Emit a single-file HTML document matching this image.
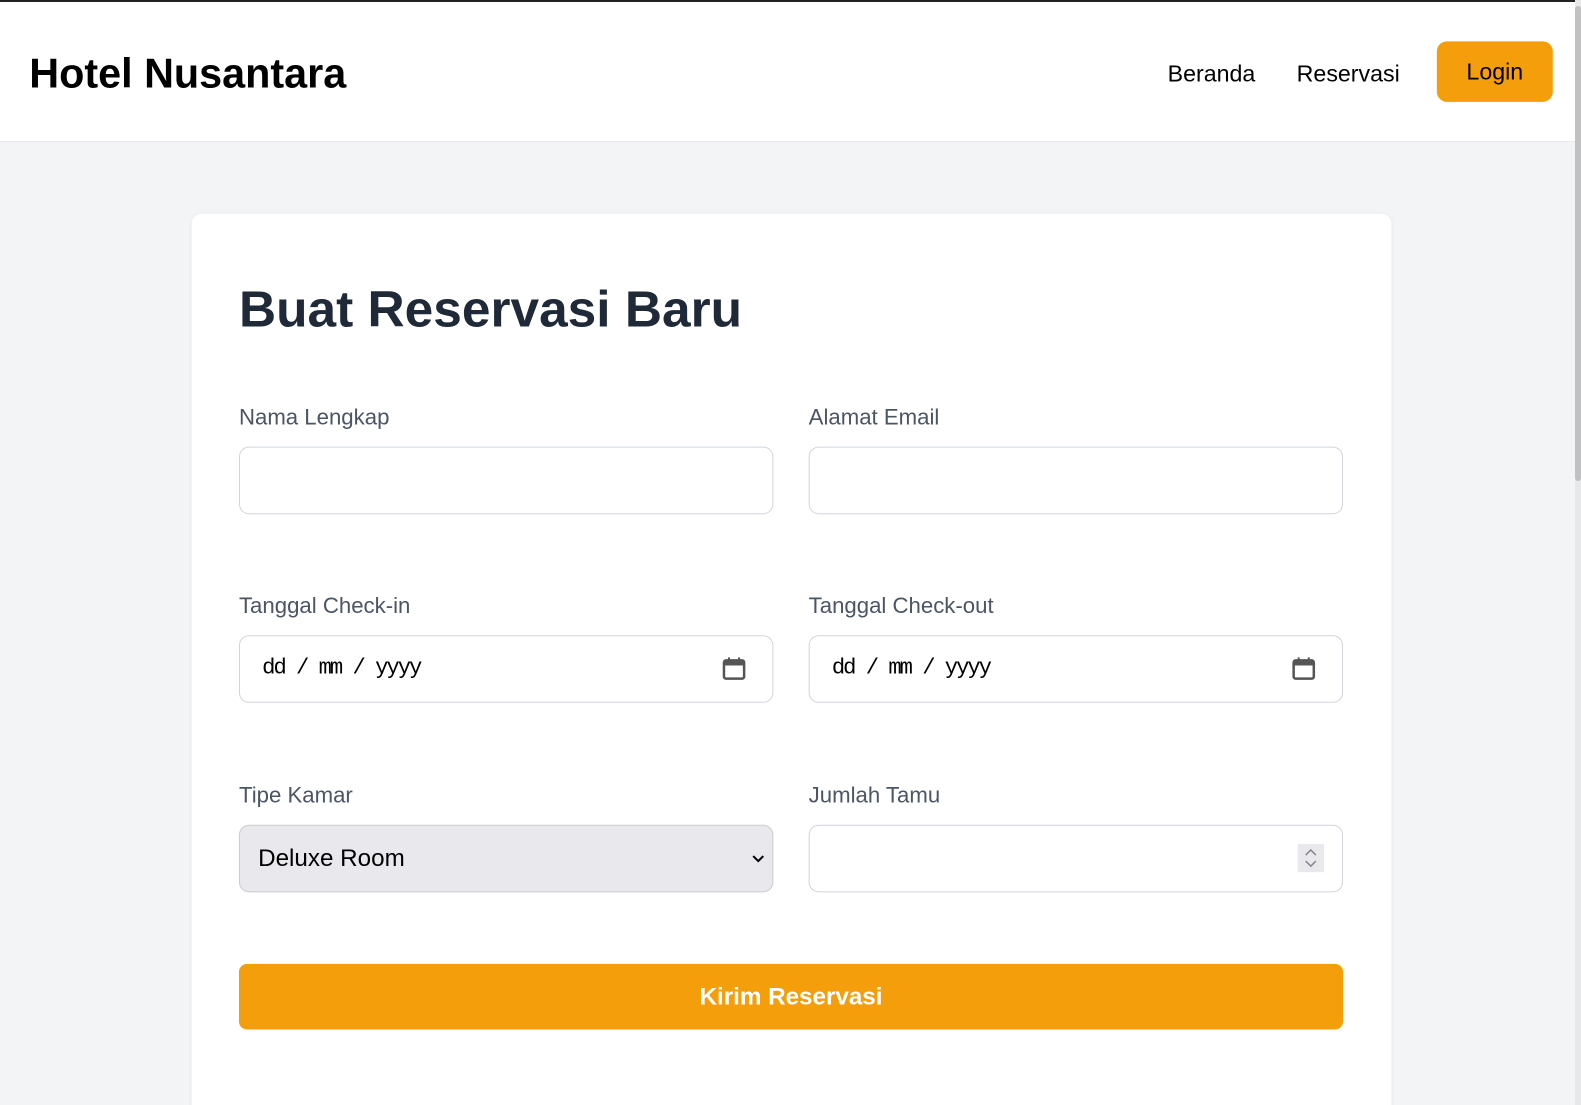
<!DOCTYPE html>
<html style="overflow:hidden;width:1581px;height:1105px"><head><style>
*{box-sizing:border-box;margin:0;padding:0}
body{width:1581px;height:1105px;overflow:hidden;background:#f3f4f6;font-family:"Liberation Sans",sans-serif;position:relative}
.w{position:absolute;left:0;top:0;width:1568px;height:1096px;transform:scale(1.0083);transform-origin:0 0}
.top{position:absolute;left:0;top:0;width:1581px;height:2px;background:#222;z-index:5}
.hdr{position:absolute;left:0;top:0;width:1581px;height:141px;background:#fff;border-bottom:1px solid #e5e7eb}
.logo{position:absolute;left:29px;top:50px;font-size:41px;font-weight:bold;color:#000}
.nav{position:absolute;top:60px;font-size:23px;color:#000}
.login{position:absolute;left:1425px;top:41px;width:115px;height:60px;background:#f49e0c;border-radius:10px;font-size:23px;line-height:60px;text-align:center}
.sb{position:absolute;left:1575px;top:0;width:6px;height:1105px;background:#e8e8e8;z-index:6}
.sb div{position:absolute;left:0;top:6px;width:6px;height:475px;background:#c1c1c1;border-radius:3px}
.card{position:absolute;left:190px;top:212px;width:1190px;height:900px;background:#fff;border-radius:10px 10px 0 0;box-shadow:0 1px 3px rgba(0,0,0,.08)}
h1{position:absolute;left:237px;top:277px;font-size:51px;font-weight:bold;color:#1f2937}
.lbl{position:absolute;font-size:22px;color:#4b5563}
.in{position:absolute;width:530px;height:67px;border:1px solid #d1d5db;border-radius:10px;background:#fff}
.date{font-family:"Liberation Mono",monospace;font-size:22px;color:#000;position:absolute;left:22px;top:19px;letter-spacing:-2px}
.cal{position:absolute;right:26px;top:20px}
.btn{position:absolute;left:237px;top:956px;width:1095px;height:65px;background:#f49e0c;border-radius:8px;color:#fff;font-weight:bold;font-size:24px;text-align:center;line-height:65px}
</style></head><body>
<div class="top"></div>
<div class="sb"><div></div></div>
<div class="w">
<div class="hdr">
<div class="logo">Hotel Nusantara</div>
<div class="nav" style="left:1158px">Beranda</div>
<div class="nav" style="left:1286px">Reservasi</div>
<div class="login">Login</div>
</div>
<div class="card"></div>
<h1>Buat Reservasi Baru</h1>
<div class="lbl" style="left:237px;top:401px">Nama Lengkap</div>
<div class="lbl" style="left:802px;top:401px">Alamat Email</div>
<div class="in" style="left:237px;top:443px"></div>
<div class="in" style="left:802px;top:443px"></div>
<div class="lbl" style="left:237px;top:588px">Tanggal Check-in</div>
<div class="lbl" style="left:802px;top:588px">Tanggal Check-out</div>
<div class="in" style="left:237px;top:630px"><span class="date">dd / mm / yyyy</span><svg class="cal" width="24" height="24" viewBox="0 0 24 24"><rect x="2" y="4" width="20" height="18" rx="2" fill="none" stroke="#555" stroke-width="2.5"/><rect x="2" y="4" width="20" height="5" fill="#555"/><rect x="6" y="1" width="2" height="4" fill="#555"/><rect x="16" y="1" width="2" height="4" fill="#555"/></svg></div>
<div class="in" style="left:802px;top:630px"><span class="date">dd / mm / yyyy</span><svg class="cal" width="24" height="24" viewBox="0 0 24 24"><rect x="2" y="4" width="20" height="18" rx="2" fill="none" stroke="#555" stroke-width="2.5"/><rect x="2" y="4" width="20" height="5" fill="#555"/><rect x="6" y="1" width="2" height="4" fill="#555"/><rect x="16" y="1" width="2" height="4" fill="#555"/></svg></div>
<div class="lbl" style="left:237px;top:776px">Tipe Kamar</div>
<div class="lbl" style="left:802px;top:776px">Jumlah Tamu</div>
<div class="in" style="left:237px;top:818px;background:#e8e8ed;border-color:#ccc"><span style="position:absolute;left:18px;top:19px;font-size:24px;color:#000">Deluxe Room</span><svg style="position:absolute;right:8px;top:28px" width="12" height="10" viewBox="0 0 12 10"><path d="M1 2l5 5 5-5" fill="none" stroke="#000" stroke-width="2"/></svg></div>
<div class="in" style="left:802px;top:818px"><div style="position:absolute;left:484px;top:18px;width:26px;height:28px;background:#e8e8ed"><svg width="26" height="28" viewBox="0 0 26 28"><path d="M8 11l5-5 5 5M8 17l5 5 5-5" fill="none" stroke="#888" stroke-width="1.5"/></svg></div></div>
<div class="btn">Kirim Reservasi</div>
</div>
</body></html>
